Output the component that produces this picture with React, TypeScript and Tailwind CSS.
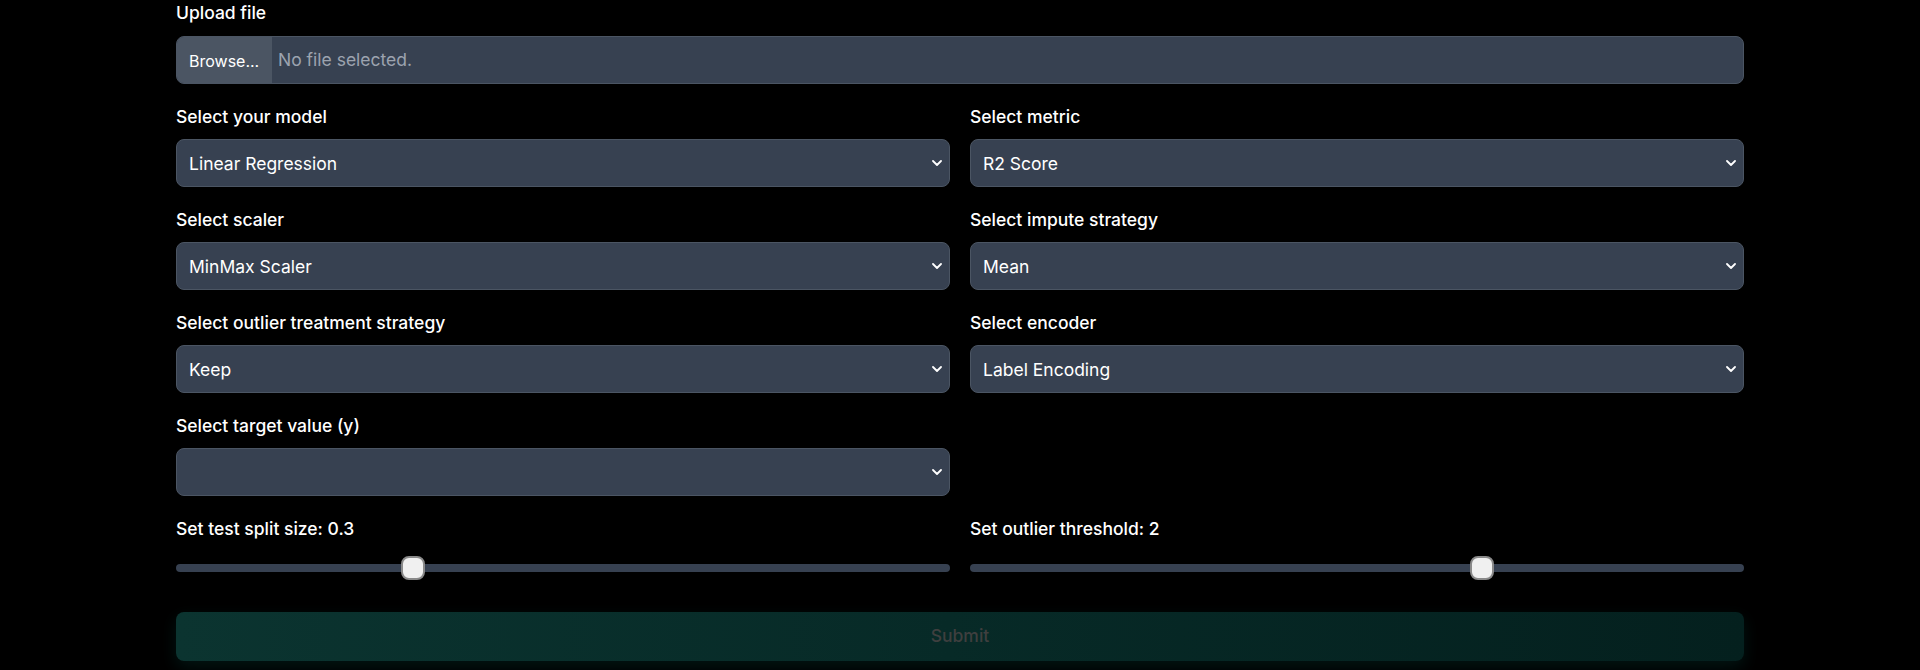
import React from "react";

const selects = [
  { label: "Select your model", value: "Linear Regression", options: ["Linear Regression", "Ridge", "Lasso", "Random Forest"] },
  { label: "Select metric", value: "R2 Score", options: ["R2 Score", "MAE", "MSE", "RMSE"] },
  { label: "Select scaler", value: "MinMax Scaler", options: ["MinMax Scaler", "Standard Scaler", "Robust Scaler"] },
  { label: "Select impute strategy", value: "Mean", options: ["Mean", "Median", "Most Frequent"] },
  { label: "Select outlier treatment strategy", value: "Keep", options: ["Keep", "Remove", "Clip"] },
  { label: "Select encoder", value: "Label Encoding", options: ["Label Encoding", "One-Hot Encoding"] },
  { label: "Select target value (y)", value: "", options: [""] },
];

function Chevron() {
  return (
    <svg width="10" height="6" viewBox="0 0 10 6" fill="none" className="pointer-events-none absolute right-[8px] top-1/2 -translate-y-1/2">
      <path d="M1 1l4 4 4-4" stroke="white" strokeWidth="1.8" strokeLinecap="round" strokeLinejoin="round" />
    </svg>
  );
}

function SelectField({ label, value, options }: { label: string; value: string; options: string[] }) {
  return (
    <div className="flex flex-col">
      <label className="mt-px mb-[10px] text-[17.5px] leading-6 font-medium text-white">{label}</label>
      <div className="relative">
        <select
          defaultValue={value}
          className="h-12 w-full appearance-none rounded-lg border border-[#4b5563] bg-[#374151] px-3 pt-[2px] text-[17.5px] text-white outline-none"
        >
          {options.map((o) => (
            <option key={o} value={o}>
              {o}
            </option>
          ))}
        </select>
        <Chevron />
      </div>
    </div>
  );
}

function Slider({ label, pct }: { label: string; pct: number }) {
  return (
    <div className="flex flex-col">
      <span className="mt-px mb-[-1px] text-[17.5px] leading-6 font-medium text-white">{label}</span>
      <div className="relative mt-4 flex h-6 items-center">
        <div className="h-2 w-full rounded-full bg-[#374151]" />
        <div
          className="absolute top-0 h-6 w-6 rounded-[8px] border-2 border-[#8a8a8a] bg-[#f0f0f0]"
          style={{ left: `calc((100% - 24px) * ${pct})` }}
        />
      </div>
    </div>
  );
}

export default function App() {
  return (
    <main className="min-h-screen bg-black pt-px font-['Inter',sans-serif] text-white">
      <div className="mx-auto w-[1568px]">
        <div className="flex flex-col">
          <label className="mb-[11px] text-[17.5px] leading-6 font-medium text-white">Upload file</label>
          <div className="flex h-12 w-full overflow-hidden rounded-lg border border-[#4b5563] bg-[#374151]">
            <span className="flex w-[95px] items-center bg-[#4b5563] pl-3 pt-px text-base text-white">Browse...</span>
            <span className="flex items-center pl-[6px] pt-px text-[17.5px] text-[#9ca3af]">No file selected.</span>
          </div>
        </div>

        <div className="mt-5 grid grid-cols-2 gap-x-5 gap-y-5">
          {selects.map((s) => (
            <SelectField key={s.label} {...s} />
          ))}
        </div>

        <div className="mt-5 grid grid-cols-2 gap-x-5">
          <Slider label="Set test split size: 0.3" pct={0.3} />
          <Slider label="Set outlier threshold: 2" pct={2 / 3} />
        </div>

        <button
          disabled
          className="mt-8 flex h-[49px] w-full items-center justify-center rounded-lg bg-gradient-to-r from-[#0b3430] to-[#04201e] text-[17.5px] font-medium text-[#3f3f3f] shadow-[0_6px_16px_rgba(6,60,54,0.35)]"
        >
          Submit
        </button>
      </div>
    </main>
  );
}
